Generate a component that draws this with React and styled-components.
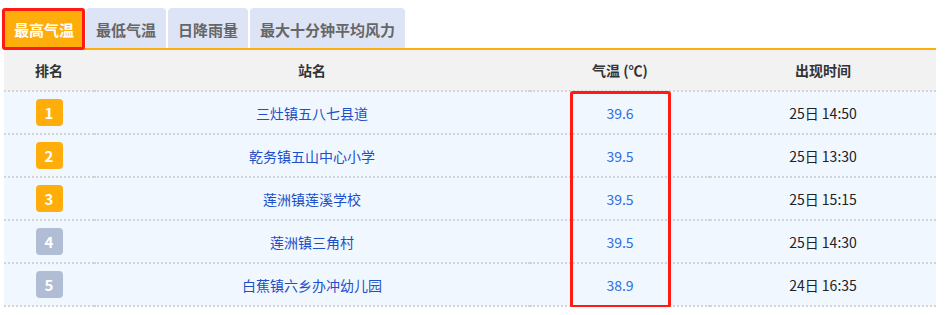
import React, {useState} from 'react'
import styled, {createGlobalStyle} from 'styled-components'

const GlobalStyle = createGlobalStyle`
  html, body {
    margin: 0;
    padding: 0;
    background: #fff;
    font-family: "Microsoft YaHei", "Noto Sans CJK SC", "Noto Sans", sans-serif;
  }
`

const Page = styled.div`
  position: relative;
  padding: 8px 10px 0 4px;
`

const TabBar = styled.div`
  display: flex;
  gap: 2px;
  height: 40px;
  border-bottom: 2px solid #ffad0a;
`

const Tab = styled.div`
  position: relative;
  display: flex;
  align-items: center;
  padding: 3px 10px 0;
  border-radius: 4px 4px 0 0;
  font-size: 15px;
  font-weight: bold;
  color: ${p => (p.$active ? '#fff' : '#666')};
  background: ${p => (p.$active ? '#ffad0a' : '#dce4f5')};
  cursor: pointer;
`

const Mark = styled.div`
  position: absolute;
  border: 3px solid #ff1a12;
  border-radius: 3px;
  pointer-events: none;
`

const TabMark = styled(Mark)`
  left: -2px;
  right: -1px;
  top: 0;
  bottom: -2px;
`

const Table = styled.table`
  width: 932px;
  border-collapse: collapse;
  table-layout: fixed;
  font-size: 14px;
`

const Th = styled.th`
  height: 40px;
  padding: 0;
  background: #f2f2f2;
  color: #333;
  font-weight: bold;
  border-bottom: 2px dotted #d4d4d4;
`

const Td = styled.td`
  height: 41px;
  padding: 0;
  text-align: center;
  background: #f0f7ff;
  border-bottom: 2px dotted #d4d4d4;
  color: ${p => p.$color || '#222'};
`

const Rank = styled.span`
  display: inline-flex;
  align-items: center;
  justify-content: center;
  width: 27px;
  height: 27px;
  border-radius: 4px;
  background: ${p => (p.$top ? '#ffad0a' : '#b1bdd4')};
  color: #fff;
  font-weight: bold;
  font-size: 15px;
  vertical-align: middle;
`

const TempMark = styled(Mark)`
  left: 570px;
  top: 91px;
  width: 101px;
  height: 217px;
  box-sizing: border-box;
`

const tabs = ['最高气温', '最低气温', '日降雨量', '最大十分钟平均风力']

const rows = [
  {station: '三灶镇五八七县道', temp: '39.6', time: '25日 14:50'},
  {station: '乾务镇五山中心小学', temp: '39.5', time: '25日 13:30'},
  {station: '莲洲镇莲溪学校', temp: '39.5', time: '25日 15:15'},
  {station: '莲洲镇三角村', temp: '39.5', time: '25日 14:30'},
  {station: '白蕉镇六乡办冲幼儿园', temp: '38.9', time: '24日 16:35'},
]

const App = () => {
  const [active, setActive] = useState(0)

  return (
    <Page>
      <GlobalStyle />
      <TabBar>
        {tabs.map((t, i) => (
          <Tab key={t} $active={i === active} onClick={() => setActive(i)}>
            {t}
            {i === 0 && <TabMark />}
          </Tab>
        ))}
      </TabBar>
      <Table>
        <colgroup>
          <col style={{width: 90}} />
          <col style={{width: 436}} />
          <col style={{width: 180}} />
          <col style={{width: 226}} />
        </colgroup>
        <thead>
          <tr>
            <Th>排名</Th>
            <Th>站名</Th>
            <Th>气温 (℃)</Th>
            <Th>出现时间</Th>
          </tr>
        </thead>
        <tbody>
          {rows.map((r, i) => (
            <tr key={r.station}>
              <Td><Rank $top={i < 3}>{i + 1}</Rank></Td>
              <Td $color="#1d4fc8">{r.station}</Td>
              <Td $color="#2d6ee0">{r.temp}</Td>
              <Td>{r.time}</Td>
            </tr>
          ))}
        </tbody>
      </Table>
      <TempMark />
    </Page>
  )
}

export default App
